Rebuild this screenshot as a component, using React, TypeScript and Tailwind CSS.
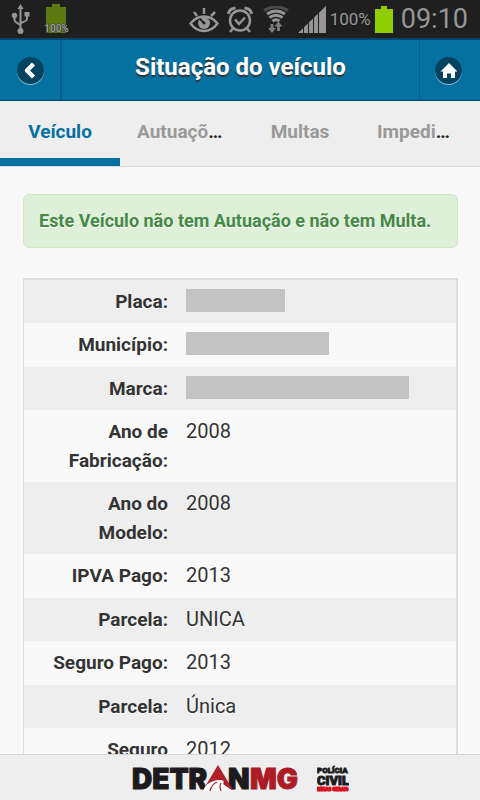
import React from "react";

type Row = { id: string; label: string; value?: string; mask?: string };

const rows: Row[] = [
  { id: "placa", label: "Placa:", mask: "w-[99px]" },
  { id: "municipio", label: "Município:", mask: "w-[143px]" },
  { id: "marca", label: "Marca:", mask: "w-[223px]" },
  { id: "fabricacao", label: "Ano de Fabricação:", value: "2008" },
  { id: "modelo", label: "Ano do Modelo:", value: "2008" },
  { id: "ipva", label: "IPVA Pago:", value: "2013" },
  { id: "parcela-ipva", label: "Parcela:", value: "UNICA" },
  { id: "seguro", label: "Seguro Pago:", value: "2013" },
  { id: "parcela-seguro", label: "Parcela:", value: "Única" },
  { id: "seguro-anterior", label: "Seguro", value: "2012" },
];

const tabs = ["Veículo", "Autuações", "Multas", "Impedimentos"];

function StatusBar() {
  return (
    <div className="flex h-[38px] shrink-0 items-center bg-[#1f1f1f] text-[#969696]">
      <svg className="ml-[11px] h-[30px] w-[19px]" viewBox="0 0 19 30" fill="none" stroke="#969696" strokeWidth="2">
        <path d="M9.500 4v22M3.500 12v4q0 2 6 5M16 11v4q0 2-6.500 4" />
        <path d="M9.500 0l3 5h-6z" fill="#969696" stroke="none" />
        <circle cx="3.500" cy="11.500" r="2.700" fill="#969696" stroke="none" />
        <path d="M13.500 8h5v4.500h-5z" fill="#969696" stroke="none" />
        <circle cx="9.500" cy="27" r="3" fill="#969696" stroke="none" />
      </svg>
      <svg className="ml-[13px] h-[30px] w-[27px]" viewBox="0 0 27 30">
        <path d="M9 0h8v3h6v26H3V3h6z" fill="#5b7a10" />
        <text x="13.500" y="28" textAnchor="middle" fontSize="10" fontWeight="500" fontFamily="Roboto, sans-serif" fill="#a3a3a3" stroke="#333" strokeWidth="1" paintOrder="stroke">100%</text>
      </svg>
      <div className="flex-1" />
      <svg className="h-[28px] w-[30px]" viewBox="0 0 30 28" fill="none" stroke="#969696" strokeWidth="2.500">
        <path d="M1.500 18.500Q7 11.500 15 11.500t13.500 7Q23 26 15 26T1.500 18.500z" />
        <path d="M15 3v6M5 7l3 4M26 7l-4 4" />
        <circle cx="15" cy="18" r="6" fill="#969696" stroke="none" />
        <path d="M10.500 13.500l4 4" stroke="#1f1f1f" strokeWidth="2" />
        <circle cx="15" cy="18" r="1.500" fill="#1f1f1f" stroke="none" />
      </svg>
      <svg className="ml-[8px] h-[27px] w-[26px]" viewBox="0 0 26 27" fill="none" stroke="#969696" strokeWidth="2.500">
        <circle cx="13" cy="14.500" r="10" />
        <path d="M8 13.500l4 4.500 6-6.500M6 22.500l-3 3.500M20 22.500l3 3.500" />
        <path d="M1.500 8Q2 2.500 8.500 2M24.500 8Q24 2.500 17.500 2" strokeWidth="3" />
      </svg>
      <svg className="ml-[10px] h-[27px] w-[26px]" viewBox="0 0 26 27" fill="none" stroke="#969696" strokeWidth="2.500">
        <path d="M1 4.500q12-7.500 24 0" stroke="#4b4b4b" strokeWidth="3" />
        <path d="M4 8q9-6 18 0M6.500 11.500q6.500-4.500 13 0M9.500 15q3.500-2.500 7 0" strokeWidth="3" />
        <path d="M9 18v5M15.500 25v-5" stroke="#7c7c7c" strokeWidth="3" />
        <path d="M5 22h8l-4 5zM11.500 20.500l4-5 4 5z" fill="#7c7c7c" stroke="none" />
      </svg>
      <svg className="ml-[9px] h-[28px] w-[28px]" viewBox="0 0 28 28">
        <path d="M0 28L28 1v27z" fill="#969696" />
        <path d="M5.500 20v8M10.500 15v13M15.500 10v18M20.500 5v23" stroke="#1f1f1f" strokeWidth="1" />
      </svg>
      <span className="ml-[4px] text-[17px] leading-none">100%</span>
      <svg className="ml-[4px] h-[27px] w-[18px]" viewBox="0 0 18 27">
        <path d="M6 0h6v3h6v24H0V3h6z" fill="#8fcf00" />
      </svg>
      <span className="ml-2 mr-3 text-[27px] leading-none">09:10</span>
    </div>
  );
}

function Header() {
  return (
    <header className="flex h-[63px] shrink-0 items-stretch border-y border-t-2 border-[#04486a] bg-[#0471a0]">
      <button type="button" aria-label="Voltar" className="flex w-[62px] items-center justify-center border-r-2 border-[#045e87]">
        <span className="flex size-[27px] items-center justify-center rounded-full bg-[#03435f] shadow-[0_1px_0_#8fc0d6]">
          <svg className="size-[18px]" viewBox="0 0 18 18" fill="none" stroke="#fff" strokeWidth="4.500" strokeLinejoin="round">
            <path d="M12.500 3L6 9.500l6.500 6.500" />
          </svg>
        </span>
      </button>
      <h1 className="flex-1 pt-[13px] text-center text-[24px] leading-[29px] font-bold text-white [text-shadow:0_2px_1px_#333]">
        Situação do veículo
      </h1>
      <button type="button" aria-label="Início" className="flex w-[61px] items-center justify-center border-l border-[#045e87] pr-[3px]">
        <span className="flex size-[27px] items-center justify-center rounded-full bg-[#03435f] shadow-[0_1px_0_#8fc0d6]">
          <svg className="size-[18px]" viewBox="0 0 18 18" fill="#fff">
            <path d="M9 2l8.500 8.500H15V17h-4v-4.500H7V17H3v-6.500H.5z" />
          </svg>
        </span>
      </button>
    </header>
  );
}

function Tabs() {
  return (
    <nav className="flex h-[66px] shrink-0 border-b border-[#dcdcdc] bg-[#eee]">
      {tabs.map((t, i) => (
        <button
          key={t}
          type="button"
          className={
            "min-w-0 flex-1 border-b-8 px-[17px] pt-1.5 text-[19px] font-bold " +
            (i === 0 ? "border-[#0471a0]" : "border-transparent")
          }
        >
          <span className="block truncate text-[#222]">
            <span className={i === 0 ? "text-[#0471a0]" : "text-[#999]"}>{t}</span>
          </span>
        </button>
      ))}
    </nav>
  );
}

function Footer() {
  return (
    <footer className="flex h-[46px] shrink-0 items-center justify-center gap-[16px] border-t border-[#d6d6d6] bg-[#eee]">
      <svg className="h-[34px] w-[170px]" viewBox="0 0 170 34" role="img" aria-label="DETRAN MG">
        <g fontFamily="Inter, sans-serif" fontWeight="900" fontSize="28" strokeWidth="1">
          <text x="1" y="28" fill="#1c1a1c" stroke="#1c1a1c">DETR</text>
          <text x="97" y="28" fill="#1c1a1c" stroke="#1c1a1c">N</text>
          <text x="119" y="28" fill="#ab1c27" stroke="#ab1c27">MG</text>
        </g>
        <path d="M87 4l15 25H72z" fill="#b01f2a" />
        <path d="M72 30q3-9 14-11h5q3 2 1 4l10 7z" fill="#fff" />
        <path d="M86 21q-6 3-7 9M90 22q-2 3 0 8" fill="none" stroke="#b01f2a" strokeWidth="1.200" />
      </svg>
      <svg className="h-[30px] w-[32px]" viewBox="0 0 32 30" role="img" aria-label="Polícia Civil Minas Gerais">
        <g fontFamily="Roboto, sans-serif" fontWeight="900">
          <text x="0" y="10" fontSize="8" fill="#1c1a1c" stroke="#1c1a1c" strokeWidth="0.800">POLÍCIA</text>
          <text x="0" y="22" fontSize="13" fill="#1c1a1c" stroke="#1c1a1c" strokeWidth="1">CIVIL</text>
          <text x="0" y="28" fontSize="4.500" fill="#d8101e" stroke="#d8101e">MINAS GERAIS</text>
        </g>
      </svg>
    </footer>
  );
}

export default function App() {
  return (
    <div className="flex h-screen flex-col overflow-hidden bg-[#f9f9f9] font-[Roboto,'Noto_Sans',sans-serif]">
      <StatusBar />
      <Header />
      <Tabs />
      <main className="min-h-0 flex-1 overflow-y-auto pt-[27px] pr-[22px] pl-[23px] text-[#333] [scrollbar-width:none] [text-shadow:0_1px_0_#fff]">
        <p role="status" className="rounded-md border border-[#d0e9c0] bg-[#dff0d8] px-[15px] py-3 text-[18px] leading-[28px] font-bold text-[#468847]">
          Este Veículo não tem Autuação e não tem Multa.
        </p>
        <table className="mt-[30px] w-full table-fixed border-separate border-spacing-0 border-t-2 border-r-2 border-l border-[#ddd]">
          <colgroup>
            <col className="w-[152px]" />
            <col />
          </colgroup>
          <tbody>
            {rows.map((r) => (
              <tr key={r.id} className="odd:bg-[#eee] even:h-11">
                <th scope="row" className="py-[7px] pr-2 pl-5 text-right align-top text-[19px] leading-[29px] font-bold">
                  {r.label}
                </th>
                <td className="py-[7px] pl-[10px] align-top text-[20px] leading-[29px]">
                  {r.mask ? <span className={"mt-[2px] block h-[23px] bg-[#c3c3c3] " + r.mask} /> : r.value}
                </td>
              </tr>
            ))}
          </tbody>
        </table>
      </main>
      <Footer />
    </div>
  );
}
